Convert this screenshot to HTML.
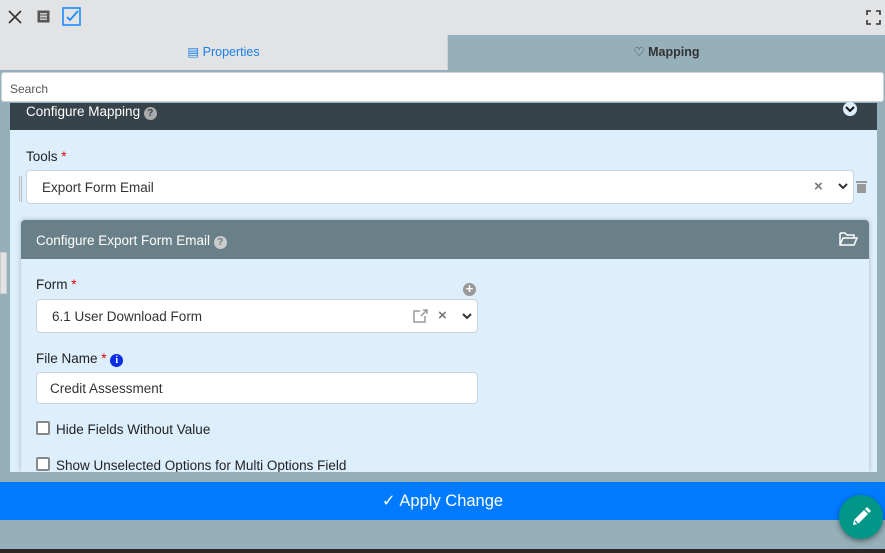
<!DOCTYPE html>
<html><head><meta charset="utf-8"><style>
*{box-sizing:border-box;margin:0;padding:0}
body{width:885px;height:553px;overflow:hidden;position:relative;background:#95b0ba;font-family:"Liberation Sans",sans-serif;font-size:13.5px;color:#333}
.a{position:absolute}
.lbl{font-size:13.5px;color:#222}
.req{color:#e00}
.inp{background:#fff;border:1px solid #ccd3da;border-radius:4px}
</style></head><body>
<div class="a" style="left:0;top:0;width:885px;height:35px;background:#e2e3e5"></div>
<svg class="a" style="left:8px;top:10px" width="14" height="14"><path d="M1 1L13 13M13 1L1 13" stroke="#333" stroke-width="1.6"/></svg>
<svg class="a" style="left:37px;top:10px" width="13" height="13"><rect x="0.5" y="0.5" width="12" height="12" fill="#555"/><rect x="3" y="3" width="7" height="7" fill="#ccc"/><path d="M3 5h7M3 8h7" stroke="#555"/></svg>
<svg class="a" style="left:62px;top:7px" width="20" height="19"><rect x="1" y="1" width="17" height="17" fill="none" stroke="#1a8cff" stroke-width="1.6"/><path d="M5 10l3 3 8-9" fill="none" stroke="#1a8cff" stroke-width="1.8"/></svg>
<svg class="a" style="left:866px;top:10px" width="15" height="15"><path d="M1 5V1h4M10 1h4v4M14 10v4h-4M5 14H1v-4" fill="none" stroke="#333" stroke-width="1.6"/></svg>
<div class="a" style="left:0;top:35px;width:448px;height:35px;background:#e2e3e5;border-right:1px solid #cfd3d6;text-align:center;line-height:35px;color:#1a7fe6;font-size:12.5px">▤ Properties</div>
<div class="a" style="left:448px;top:35px;width:437px;height:35px;background:#95b0ba;text-align:center;line-height:35px;color:#333;font-size:12.5px;font-weight:bold"><span style="font-weight:normal">♡</span> Mapping</div>
<div class="a inp" style="left:1px;top:72px;width:883px;height:30px;line-height:32px;padding-left:8px;color:#555;font-size:12px;border-radius:3px">Search</div>
<div class="a" style="left:10px;top:103px;width:867px;height:369px;background:#ddeefc"></div>
<div class="a" style="left:10px;top:103px;width:867px;height:27px;background:#37434a;color:#fff;font-size:13.5px;padding-left:16px;line-height:17px">Configure Mapping <span style="display:inline-block;width:13px;height:13px;border-radius:50%;background:#aaa;color:#37434a;font-size:10px;text-align:center;line-height:13px;font-weight:bold">?</span></div>
<div class="a" style="left:843px;top:102px;width:14px;height:14px;border-radius:50%;background:#ddeefc"></div>
<svg class="a" style="left:845px;top:105px" width="10" height="8"><path d="M1 2l4 4 4-4" fill="none" stroke="#111" stroke-width="2"/></svg>
<div class="a lbl" style="left:26px;top:149px">Tools <span class="req">*</span></div>
<div class="a" style="left:19px;top:176px;width:3px;height:26px;border-left:1px solid #bbb;border-right:1px solid #bbb"></div>
<div class="a inp" style="left:26px;top:170px;width:828px;height:34px;line-height:34px;padding-left:15px">Export Form Email</div>
<div class="a" style="left:814px;top:178px;color:#777;font-size:15px;font-weight:bold">×</div>
<svg class="a" style="left:838px;top:183px" width="10" height="7"><path d="M1 1l4 4 4-4" fill="none" stroke="#333" stroke-width="2"/></svg>
<svg class="a" style="left:856px;top:180px" width="11" height="13"><rect x="0" y="1" width="11" height="2" fill="#999"/><rect x="1" y="4" width="9" height="9" fill="#999"/></svg>
<div class="a" style="left:21px;top:220px;width:848px;height:252px;background:#ddeefc;box-shadow:0 0 5px rgba(0,0,0,.25);border-radius:4px 4px 0 0"></div>
<div class="a" style="left:21px;top:220px;width:848px;height:39px;background:#6a8089;border-radius:4px 4px 0 0;color:#fff;padding-left:15px;line-height:41px;font-size:13.5px">Configure Export Form Email <span style="display:inline-block;width:13px;height:13px;border-radius:50%;background:#ccc;color:#6a8089;font-size:10px;text-align:center;line-height:13px;font-weight:bold">?</span></div>
<svg class="a" style="left:839px;top:232px" width="19" height="14"><path d="M1 1h5l2 2h7v3M1 1v12h14l3-7H4L1 13" fill="none" stroke="#fff" stroke-width="1.5"/></svg>
<div class="a lbl" style="left:36px;top:277px">Form <span class="req">*</span></div>
<div class="a" style="left:463px;top:283px;width:13px;height:13px;border-radius:50%;background:#999;color:#fff;font-size:13px;line-height:12px;text-align:center;font-weight:bold">+</div>
<div class="a inp" style="left:36px;top:299px;width:442px;height:34px;line-height:34px;padding-left:15px">6.1 User Download Form</div>
<svg class="a" style="left:413px;top:309px" width="15" height="14"><path d="M7 2H1v11h11V7M8 7l6-6M10 1h4v4" fill="none" stroke="#999" stroke-width="1.5"/></svg>
<div class="a" style="left:438px;top:307px;color:#777;font-size:15px;font-weight:bold">×</div>
<svg class="a" style="left:462px;top:313px" width="10" height="7"><path d="M1 1l4 4 4-4" fill="none" stroke="#333" stroke-width="2"/></svg>
<div class="a lbl" style="left:36px;top:351px">File Name <span class="req">*</span> <span style="display:inline-block;width:13px;height:13px;border-radius:50%;background:#0a2ee8;color:#fff;font-size:10px;text-align:center;line-height:13px;font-weight:bold;font-family:'Liberation Serif',serif">i</span></div>
<div class="a inp" style="left:36px;top:372px;width:442px;height:32px;line-height:32px;padding-left:13px">Credit Assessment</div>
<div class="a" style="left:36px;top:421px;width:14px;height:14px;border:2px solid #888;border-radius:2px;background:#fff"></div>
<div class="a lbl" style="left:56px;top:422px">Hide Fields Without Value</div>
<div class="a" style="left:36px;top:457px;width:14px;height:14px;border:2px solid #888;border-radius:2px;background:#fff"></div>
<div class="a lbl" style="left:56px;top:458px">Show Unselected Options for Multi Options Field</div>
<div class="a" style="left:0;top:472px;width:885px;height:10px;background:#95b0ba"></div>
<div class="a" style="left:0;top:252px;width:7px;height:42px;background:#e2e3e5;border:1px solid #ccc"></div>
<div class="a" style="left:0;top:482px;width:885px;height:38px;background:#007bff;color:#fff;text-align:center;line-height:38px;font-size:16.5px">✓ Apply Change</div>
<div class="a" style="left:0;top:549px;width:885px;height:4px;background:#2a2624"></div>
<div class="a" style="left:839px;top:495px;width:44px;height:44px;border-radius:50%;background:#009688;box-shadow:0 2px 6px rgba(0,0,0,.45)"></div>
<svg class="a" style="left:850px;top:506px" width="22" height="22"><path d="M3 19l1-5L14 4l4 4L8 18z" fill="#fff"/><path d="M5 15l3 3" stroke="#009688" stroke-width="1.3"/><path d="M15 3l2-2 4 4-2 2z" fill="#fff"/></svg>
</body></html>
